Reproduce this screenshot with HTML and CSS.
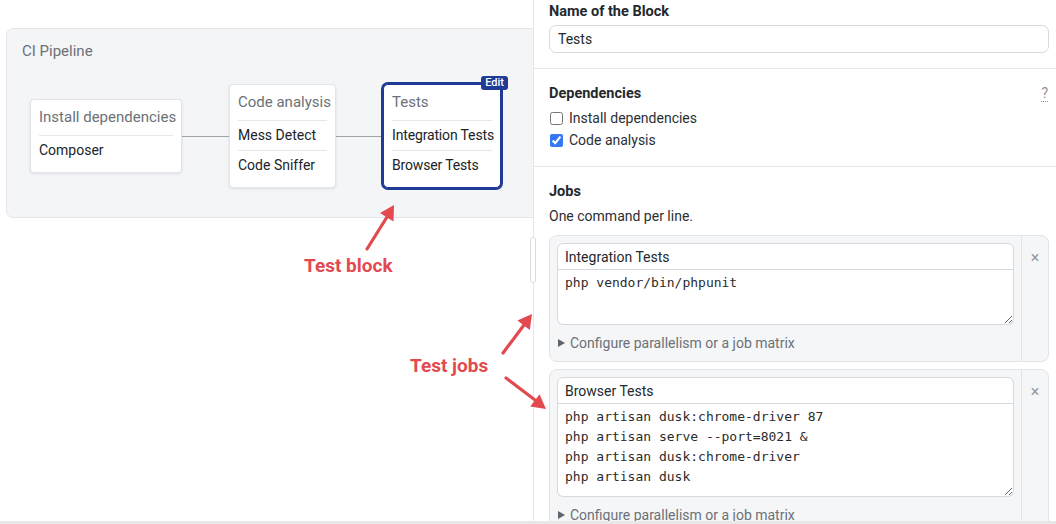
FILE: index.html
```html
<!DOCTYPE html>
<html lang="en">
<head>
<meta charset="utf-8">
<title>CI Pipeline – Block editor</title>
<link rel="stylesheet" href="styles.css">
</head>
<body>
<div class="app">
  <main class="canvas">
    <section class="pipeline">
      <h2 class="pipeline-title">CI Pipeline</h2>
      <div class="flow">
        <div class="block b1">
          <div class="block-head">Install dependencies</div>
          <div class="job">Composer</div>
        </div>
        <div class="link"></div>
        <div class="block b2">
          <div class="block-head">Code analysis</div>
          <div class="job">Mess Detect</div>
          <div class="job">Code Sniffer</div>
        </div>
        <div class="link"></div>
        <div class="block b3 selected">
          <span class="edit-badge">Edit</span>
          <div class="block-head">Tests</div>
          <div class="job">Integration Tests</div>
          <div class="job">Browser Tests</div>
        </div>
      </div>
    </section>
  </main>

  <aside class="editor">
    <span class="splitter"></span>

    <section class="sec sec-name">
      <div class="sec-title">Name of the Block</div>
      <input class="text-input" type="text" value="Tests">
    </section>

    <section class="sec sec-deps">
      <div class="sec-head">
        <div class="sec-title">Dependencies</div>
        <span class="help">?</span>
      </div>
      <label class="check"><input type="checkbox"> <span>Install dependencies</span></label>
      <label class="check"><input type="checkbox" checked> <span>Code analysis</span></label>
    </section>

    <section class="sec sec-jobs">
      <div class="sec-title">Jobs</div>
      <div class="sec-sub">One command per line.</div>

      <div class="job-card">
        <div class="job-main">
          <input class="job-name" type="text" value="Integration Tests">
          <textarea class="job-cmds cmds-1" spellcheck="false">php vendor/bin/phpunit</textarea>
          <div class="configure">
            <svg class="tri" width="7" height="8" viewBox="0 0 7 8"><path d="M0 0 L7 4 L0 8 Z" fill="#5f656b"/></svg>
            <span>Configure parallelism or a job matrix</span>
          </div>
        </div>
        <div class="job-side"><span class="close">×</span></div>
      </div>

      <div class="job-card">
        <div class="job-main">
          <input class="job-name" type="text" value="Browser Tests">
          <textarea class="job-cmds cmds-2" spellcheck="false">php artisan dusk:chrome-driver 87
php artisan serve --port=8021 &amp;
php artisan dusk:chrome-driver
php artisan dusk</textarea>
          <div class="configure">
            <svg class="tri" width="7" height="8" viewBox="0 0 7 8"><path d="M0 0 L7 4 L0 8 Z" fill="#5f656b"/></svg>
            <span>Configure parallelism or a job matrix</span>
          </div>
        </div>
        <div class="job-side"><span class="close">×</span></div>
      </div>
    </section>
  </aside>
</div>

<div class="annotations">
  <svg class="arrows" width="1056" height="524" viewBox="0 0 1056 524">
    <g stroke="#e34a4f" stroke-width="3.2" stroke-linecap="round" fill="none">
      <line x1="367" y1="249" x2="387" y2="217"/>
      <line x1="503" y1="353" x2="524" y2="325"/>
      <line x1="506" y1="378" x2="535" y2="400"/>
    </g>
    <g fill="#e34a4f">
      <polygon points="394,205 393.5,221.5 380,213"/>
      <polygon points="532,314 529.8,330 517.4,320.6"/>
      <polygon points="546,409 530.2,406.5 539.6,394.3"/>
    </g>
  </svg>
  <div class="note note-block">Test block</div>
  <div class="note note-jobs">Test jobs</div>
</div>

<div class="statusbar"></div>
</body>
</html>
```

FILE: styles.css
```css
* { box-sizing: border-box; }

html, body {
  margin: 0;
  width: 1056px;
  height: 524px;
  overflow: hidden;
  background: #ffffff;
}

body {
  font-family: Roboto, "Liberation Sans", Arial, sans-serif;
  color: #24292e;
  position: relative;
}

.app {
  display: flex;
  height: 524px;
}

/* ---------- left canvas ---------- */
.canvas {
  flex: none;
  width: 533px;
  overflow: hidden;
  padding-top: 28px;
}

.pipeline {
  margin-left: 6px;
  width: 600px;
  height: 190px;
  background: #f4f5f7;
  border: 1px solid #e3e5e9;
  border-radius: 7px;
  padding: 13px 0 0 15px;
}

.pipeline-title {
  margin: 0;
  font-size: 15px;
  font-weight: 400;
  line-height: 18px;
  color: #6b7177;
}

.flow {
  display: flex;
  align-items: center;
  height: 104px;
  margin-top: 24px;
  padding-left: 8px;
}

.block {
  flex: none;
  position: relative;
  background: #ffffff;
  border: 1px solid #e1e4e8;
  border-radius: 4px;
  padding: 6px 8px 7px;
  box-shadow: 0 1px 3px rgba(16, 24, 40, 0.10);
  white-space: nowrap;
}

.b1 { width: 152px; }
.b2 { width: 107px; }
.b3 { width: 118px; }

.block-head {
  font-size: 15px;
  line-height: 22px;
  padding-bottom: 7px;
  color: #6b7177;
}

.job {
  border-top: 1px solid #e5e7ea;
  font-size: 14px;
  line-height: 29px;
  color: #202428;
}

.b3 .job { letter-spacing: -0.15px; }

.link {
  flex: none;
  width: 47px;
  height: 1px;
  background: #a0a5aa;
}

.selected {
  border-color: #1f3b94;
  border-radius: 5px;
  box-shadow: 0 0 0 2px #1f3b94;
}

.edit-badge {
  position: absolute;
  top: -9px;
  right: -8px;
  background: #1f3b94;
  color: #ffffff;
  font-size: 11px;
  font-weight: 500;
  line-height: 14px;
  padding: 0 4px;
  border-radius: 3px;
}

/* ---------- right editor ---------- */
.editor {
  flex: 1;
  min-width: 0;
  position: relative;
  border-left: 1px solid #e4e6e9;
  background: #ffffff;
}

.splitter {
  position: absolute;
  left: -4px;
  top: 237px;
  width: 6px;
  height: 46px;
  background: #ffffff;
  border: 1px solid #d9dce0;
  border-radius: 3px;
}

.sec {
  padding: 15px 7px 15px 15px;
  border-bottom: 1px solid #e5e7ea;
}

.sec-name { padding-top: 2px; }

.sec-jobs { border-bottom: 0; }

.sec-title {
  font-size: 14.5px;
  font-weight: 700;
  line-height: 20px;
  color: #24292e;
}

.text-input {
  display: block;
  width: 100%;
  height: 28px;
  margin-top: 3px;
  padding: 0 8px;
  border: 1px solid #d6d9de;
  border-radius: 7px;
  font: 14px Roboto, "Liberation Sans", Arial, sans-serif;
  color: #24292e;
  background: #ffffff;
  outline: none;
}

.sec-head {
  display: flex;
  justify-content: space-between;
  align-items: center;
}

.help {
  margin-right: 1px;
  font-size: 14px;
  line-height: 15px;
  color: #8b9096;
  border-bottom: 1px dotted #8b9096;
}

.check {
  display: flex;
  align-items: center;
  gap: 6px;
  height: 22px;
  font-size: 14px;
  color: #2b2f34;
}

.sec-head + .check { margin-top: 3px; }

.check input {
  width: 13px;
  height: 13px;
  margin: 0 0 0 1px;
  accent-color: #3478f6;
}

.sec-sub {
  margin-top: 4px;
  font-size: 14px;
  line-height: 20px;
  color: #2b2f34;
}

.job-card {
  display: flex;
  margin-top: 9px;
  background: #f5f6f8;
  border: 1px solid #e1e4e8;
  border-radius: 8px;
}

.job-card + .job-card { margin-top: 7px; }

.job-main {
  flex: 1;
  min-width: 0;
  padding: 7px 7px 0 7px;
}

.job-name {
  display: block;
  width: 100%;
  height: 27px;
  padding: 0 7px;
  border: 1px solid #d6d9de;
  border-radius: 6px 6px 0 0;
  font: 14px Roboto, "Liberation Sans", Arial, sans-serif;
  color: #24292e;
  background: #ffffff;
  outline: none;
}

.job-cmds {
  display: block;
  width: 100%;
  margin: 0;
  padding: 3px 7px;
  border: 1px solid #d6d9de;
  border-top: 0;
  border-radius: 0 0 6px 6px;
  font: 13px "DejaVu Sans Mono", "Liberation Mono", monospace;
  line-height: 20px;
  color: #2b2b2b;
  background: #ffffff;
  outline: none;
  resize: vertical;
  overflow: hidden;
  white-space: pre;
}

.cmds-1 { height: 55px; }
.cmds-2 { height: 93px; }

.configure {
  display: flex;
  align-items: center;
  gap: 5px;
  height: 36px;
  padding-left: 1px;
  font-size: 14px;
  color: #6b7177;
}

.tri { flex: none; }

.job-side {
  flex: none;
  width: 27px;
  border-left: 1px solid #e1e4e8;
  text-align: center;
  padding-top: 12px;
}

.close {
  font-size: 16px;
  line-height: 20px;
  color: #9499a0;
}

/* ---------- annotation layer ---------- */
.annotations {
  position: absolute;
  inset: 0;
  pointer-events: none;
}

.arrows {
  position: absolute;
  left: 0;
  top: 0;
}

.note {
  position: absolute;
  font-size: 19px;
  font-weight: 700;
  line-height: 24px;
  color: #e34a4f;
  white-space: nowrap;
}

.note-block { left: 304px; top: 254px; }
.note-jobs { left: 410px; top: 354px; }

.statusbar {
  position: absolute;
  left: 0;
  right: 0;
  bottom: 0;
  height: 3px;
  background: #e8e8e8;
}
```
